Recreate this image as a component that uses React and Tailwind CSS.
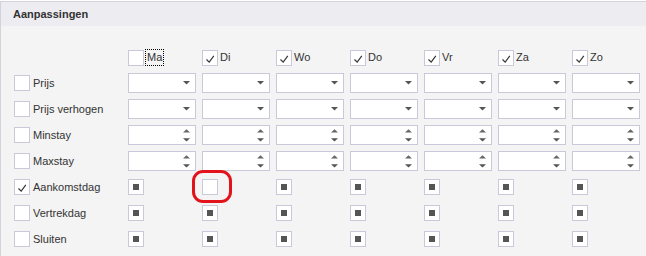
import React from "react";

const FONT = { fontFamily: '"Liberation Sans", Arial, sans-serif' };

function Check() {
  return (
    <svg width="16" height="16" viewBox="0 0 16 16" className="absolute left-[-1px] top-[-1px]">
      <polyline points="4.5,9.5 7.2,12.2 11.8,5.8" fill="none" stroke="#333" strokeWidth="1.15" />
    </svg>
  );
}

function Box({ state }) {
  return (
    <div className="relative w-4 h-4 shrink-0 border border-[#c9c9d9] bg-white">
      {state === "checked" && <Check />}
      {state === "ind" && <div className="absolute left-[4px] top-[4px] w-[6px] h-[6px] bg-[#555]" />}
    </div>
  );
}

function Combo() {
  return (
    <div className="w-[68px] h-5 border border-[#c9c9d9] bg-white flex items-center justify-end pr-[5px]">
      <svg width="7" height="4" viewBox="0 0 7 4">
        <polygon points="0,0 7,0 3.5,3.5" fill="#555" />
      </svg>
    </div>
  );
}

function Spin() {
  return (
    <div className="w-[68px] h-5 border border-[#c9c9d9] bg-white flex flex-col items-end justify-center gap-[5px] pr-[5px]">
      <svg width="7" height="4" viewBox="0 0 7 4">
        <polygon points="3.5,0.3 7,3.5 0,3.5" fill="#666" />
      </svg>
      <svg width="7" height="4" viewBox="0 0 7 4">
        <polygon points="0,0.3 7,0.3 3.5,3.5" fill="#555" />
      </svg>
    </div>
  );
}

const days = ["Ma", "Di", "Wo", "Do", "Vr", "Za", "Zo"];

const rows = [
  { label: "Prijs", checked: false, kind: "combo" },
  { label: "Prijs verhogen", checked: false, kind: "combo" },
  { label: "Minstay", checked: false, kind: "spin" },
  { label: "Maxstay", checked: false, kind: "spin" },
  { label: "Aankomstdag", checked: true, kind: "box", empty: 1 },
  { label: "Vertrekdag", checked: false, kind: "box" },
  { label: "Sluiten", checked: false, kind: "box" },
];

export default function App() {
  return (
    <div className="w-[646px] h-[256px] bg-white pt-px overflow-hidden text-[#333] text-[11px]" style={FONT}>
      <div className="h-full border-t border-l border-[#d3d3dd] bg-[#f4f4f4] flex flex-col">
        <div className="h-6 bg-[#ededf1] flex items-center pl-[12px] font-bold text-[#333]">Aanpassingen</div>
        <div className="pl-[12px] pt-[21px] grid grid-cols-[109px_repeat(7,68px)] gap-x-[6px] gap-y-[6px] auto-rows-[20px]">
          <div />
          {days.map((d, i) => (
            <div key={d} className="flex items-center pt-[1px] gap-[2px]">
              <Box state={i === 0 ? "off" : "checked"} />
              {i === 0 ? (
                <span className="border border-dotted border-black h-[17px] px-px flex items-center -ml-px leading-none">{d}</span>
              ) : (
                <span className="leading-none">{d}</span>
              )}
            </div>
          ))}
          {rows.map((r) => (
            <React.Fragment key={r.label}>
              <div className="flex items-center gap-[3px] pl-px">
                <Box state={r.checked ? "checked" : "off"} />
                <span className="leading-none">{r.label}</span>
              </div>
              {days.map((d, i) => (
                <div key={d} className="relative flex items-center">
                  {r.kind === "combo" && <Combo />}
                  {r.kind === "spin" && <Spin />}
                  {r.kind === "box" && (
                    <>
                      <Box state={r.empty === i ? "off" : "ind"} />
                      {r.empty === i && (
                        <div className="absolute left-[-10px] top-[-7px] w-[40px] h-[33px] border-[3px] border-[#e3131b] rounded-[11px]" />
                      )}
                    </>
                  )}
                </div>
              ))}
            </React.Fragment>
          ))}
        </div>
      </div>
    </div>
  );
}
